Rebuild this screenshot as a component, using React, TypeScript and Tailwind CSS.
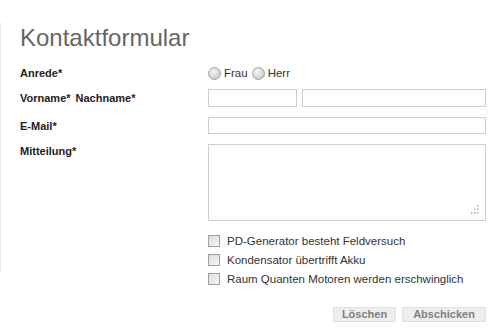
const Radio = ({ label }: { label: string }) => (
  <label className="flex items-center gap-[3px]">
    <span className="block w-[13px] h-[13px] rounded-full border border-[#a3a3a3] bg-[radial-gradient(circle_at_40%_35%,#f6f6f6_0%,#d9d9d9_50%,#b8b8b8_100%)]" />
    <span>{label}</span>
  </label>
)

const Check = ({ label }: { label: string }) => (
  <label className="flex items-center h-[19px] gap-[7px]">
    <span className="block w-[12px] h-[12px] border border-[#a0a0a0] bg-gradient-to-br from-[#dcdcdc] to-[#f6f6f6]" />
    <span>{label}</span>
  </label>
)

const App = () => {
  return (
    <div className="w-[499px] h-[331px] bg-white flex font-['Liberation_Sans',Arial,sans-serif] text-[#222]">
      {/* faint rule on the left */}
      <div className="w-px h-[250px] mt-[22px] bg-[#ececec] shrink-0" />

      <form className="flex-1 pl-[19px] pt-[24px]">
        <h1 className="text-[24px] leading-[28px] text-[#666] font-normal">Kontaktformular</h1>

        <div className="grid grid-cols-[188px_278px] mt-[10px] text-[11px] leading-[14px]">
          {/* Anrede */}
          <div className="h-[22px] flex items-center font-bold">Anrede*</div>
          <div className="h-[22px] flex items-center gap-[4px] text-[11.5px] text-[#333]">
            <Radio label="Frau" />
            <Radio label="Herr" />
          </div>

          {/* Names */}
          <div className="mt-[5px] h-[18px] flex items-center font-bold gap-[5px]">
            <span>Vorname*</span>
            <span>Nachname*</span>
          </div>
          <div className="mt-[5px] h-[18px] flex gap-[5px]">
            <input className="w-[89px] h-[18px] border border-[#cfcfcf] outline-none" />
            <input className="w-[184px] h-[18px] border border-[#cfcfcf] outline-none" />
          </div>

          {/* E-Mail */}
          <div className="mt-[10px] h-[17px] flex items-center font-bold">E-Mail*</div>
          <div className="mt-[10px] h-[17px]">
            <input className="w-[278px] h-[17px] border border-[#cfcfcf] outline-none" />
          </div>

          {/* Mitteilung */}
          <div className="mt-[10px] font-bold">Mitteilung*</div>
          <div className="mt-[10px] relative h-[77px]">
            <textarea className="w-[278px] h-[77px] border border-[#cfcfcf] outline-none resize-none block" />
            <svg className="absolute right-[7px] bottom-[7px]" width="10" height="9" viewBox="0 0 10 9">
              <g fill="#a8a8a8">
                <rect x="8" y="0" width="1.5" height="1.5" />
                <rect x="5" y="3.5" width="1.5" height="1.5" />
                <rect x="8" y="3.5" width="1.5" height="1.5" />
                <rect x="2" y="7" width="1.5" height="1.5" />
                <rect x="5" y="7" width="1.5" height="1.5" />
                <rect x="8" y="7" width="1.5" height="1.5" />
              </g>
            </svg>
          </div>

          {/* Checkboxes */}
          <div />
          <div className="mt-[10px] text-[11.5px] text-[#333]">
            <Check label="PD-Generator besteht Feldversuch" />
            <Check label="Kondensator übertrifft Akku" />
            <Check label="Raum Quanten Motoren werden erschwinglich" />
          </div>

          {/* Buttons */}
          <div />
          <div className="mt-[19px] flex justify-end gap-[6px]">
            <button type="button" className="w-[63px] h-[15px] bg-[#eeeeee] border border-[#e0e0e0] text-[11px] leading-[13px] font-bold text-[#808080]">
              Löschen
            </button>
            <button type="button" className="w-[84px] h-[15px] bg-[#eeeeee] border border-[#e0e0e0] text-[11px] leading-[13px] font-bold text-[#808080]">
              Abschicken
            </button>
          </div>
        </div>
      </form>
    </div>
  )
}

export default App
